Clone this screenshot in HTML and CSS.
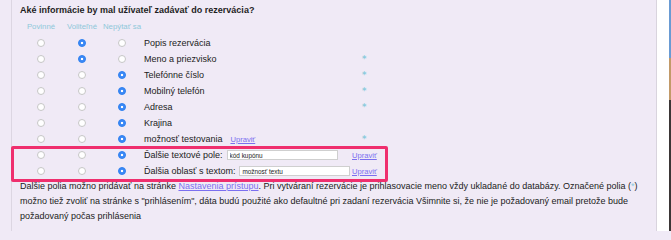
FILE: index.html
```html
<!DOCTYPE html>
<html lang="sk">
<head>
<meta charset="utf-8">
<title>Rezervácia</title>
<link rel="stylesheet" href="styles.css">
</head>
<body>
<div class="page">
  <div class="panel">
    <h3 class="title">Aké informácie by mal užívateľ zadávať do rezervácia?</h3>
    <div class="grid">
      <div class="head">Povinné</div>
      <div class="head">Voliteľné</div>
      <div class="head">Nepýtať sa</div>
      <div></div><div></div>

      <div class="rc"><input class="radio" type="radio" name="r1"></div>
      <div class="rc"><input class="radio" type="radio" name="r1" checked></div>
      <div class="rc"><input class="radio" type="radio" name="r1"></div>
      <div class="label">Popis rezervácia</div>
      <div class="star"></div>

      <div class="rc"><input class="radio" type="radio" name="r2"></div>
      <div class="rc"><input class="radio" type="radio" name="r2" checked></div>
      <div class="rc"><input class="radio" type="radio" name="r2"></div>
      <div class="label">Meno a priezvisko</div>
      <div class="star">*</div>

      <div class="rc"><input class="radio" type="radio" name="r3"></div>
      <div class="rc"><input class="radio" type="radio" name="r3"></div>
      <div class="rc"><input class="radio" type="radio" name="r3" checked></div>
      <div class="label">Telefónne číslo</div>
      <div class="star">*</div>

      <div class="rc"><input class="radio" type="radio" name="r4"></div>
      <div class="rc"><input class="radio" type="radio" name="r4"></div>
      <div class="rc"><input class="radio" type="radio" name="r4" checked></div>
      <div class="label">Mobilný telefón</div>
      <div class="star">*</div>

      <div class="rc"><input class="radio" type="radio" name="r5"></div>
      <div class="rc"><input class="radio" type="radio" name="r5"></div>
      <div class="rc"><input class="radio" type="radio" name="r5" checked></div>
      <div class="label">Adresa</div>
      <div class="star">*</div>

      <div class="rc"><input class="radio" type="radio" name="r6"></div>
      <div class="rc"><input class="radio" type="radio" name="r6"></div>
      <div class="rc"><input class="radio" type="radio" name="r6" checked></div>
      <div class="label">Krajina</div>
      <div class="star"></div>

      <div class="rc"><input class="radio" type="radio" name="r7"></div>
      <div class="rc"><input class="radio" type="radio" name="r7"></div>
      <div class="rc"><input class="radio" type="radio" name="r7" checked></div>
      <div class="label">možnosť testovania<a class="edit edit-inline" href="#">Upraviť</a></div>
      <div class="star">*</div>

      <div class="rc"><input class="radio" type="radio" name="r8"></div>
      <div class="rc"><input class="radio" type="radio" name="r8"></div>
      <div class="rc"><input class="radio" type="radio" name="r8" checked></div>
      <div class="label">Ďalšie textové pole:<input class="field" type="text" value="kód kupónu"></div>
      <div class="action"><a class="edit" href="#">Upraviť</a></div>

      <div class="rc"><input class="radio" type="radio" name="r9"></div>
      <div class="rc"><input class="radio" type="radio" name="r9"></div>
      <div class="rc"><input class="radio" type="radio" name="r9" checked></div>
      <div class="label">Ďalšia oblasť s textom:<input class="field" type="text" value="možnosť textu"></div>
      <div class="action"><a class="edit" href="#">Upraviť</a></div>
    </div>
    <p class="note">Ďalšie polia možno pridávať na stránke <a class="link" href="#">Nastavenia prístupu</a>. Pri vytváraní rezervácie je prihlasovacie meno vždy ukladané do databázy. Označené polia (<span class="mark">*</span>)<br>možno tiež zvoliť na stránke s "prihlásením", dáta budú použité ako defaultné pri zadaní rezervácia Všimnite si, že nie je požadovaný email pretože bude<br>požadovaný počas prihlásenia</p>
  </div>
  <div class="gutter"></div>
  <div class="strip"></div>
</div>
<div class="highlight"></div>
</body>
</html>
```

FILE: styles.css
```css
html, body {
  margin: 0;
  padding: 0;
}
body {
  background: #f0eaf6;
  font-family: "Liberation Sans", Arial, sans-serif;
  color: #222;
  width: 671px;
  height: 231px;
  overflow: hidden;
  position: relative;
}
.page {
  display: flex;
  height: 231px;
}
.panel {
  box-sizing: border-box;
  margin-left: 11px;
  width: 646px;
  border-left: 1px solid #dcd6e2;
  border-right: 1px solid #d9d4de;
  padding: 3px 0 0 8px;
}
.gutter {
  width: 12px;
  background: #fff;
}
.strip {
  width: 2px;
  background: linear-gradient(#6a9bd3 0 58px, #c29a69 58px 100px, #3b3636 100px);
}
.title {
  margin: 0;
  font-size: 9px;
  line-height: 14px;
  font-weight: bold;
  color: #1e1e1e;
}
.grid {
  margin-top: 2px;
  display: grid;
  grid-template-columns: 42px 40px 40px 210px 40px;
  grid-auto-rows: 16px;
}
.head {
  font-size: 7.8px;
  color: #8fc8da;
  text-align: center;
  line-height: 16px;
  white-space: nowrap;
}
.rc {
  display: flex;
  align-items: center;
  justify-content: center;
}
.radio {
  appearance: none;
  -webkit-appearance: none;
  box-sizing: border-box;
  width: 8px;
  height: 8px;
  margin: 0;
  border: 1px solid #c6c6c6;
  border-radius: 50%;
  background: #fff;
}
.radio:checked {
  border-color: #3282f0;
  background: #3a88f6 radial-gradient(circle, #fff 0 1.2px, transparent 1.6px);
}
.label {
  display: flex;
  align-items: center;
  padding-left: 2px;
  font-size: 9px;
  white-space: nowrap;
}
.star {
  font-family: "DejaVu Sans", sans-serif;
  font-size: 8.5px;
  font-weight: bold;
  line-height: 16px;
  color: #8ccadc;
  padding-left: 10px;
  margin-top: 0;
}
.action {
  display: flex;
  align-items: center;
}
.edit {
  font-size: 7.6px;
  color: #7b6ff0;
  text-decoration: underline;
}
.edit-inline {
  margin-left: 8px;
}
.field {
  box-sizing: border-box;
  margin: 0 0 0 4px;
  width: 111px;
  height: 10px;
  padding: 0 2px;
  border: 1px solid #cfcfcf;
  background: #fff;
  font-family: "Liberation Sans", Arial, sans-serif;
  font-size: 6.4px;
  color: #222;
  outline: none;
}
.note {
  margin: 0;
  font-size: 9px;
  line-height: 15px;
  color: #222;
  white-space: nowrap;
}
.link {
  color: #7b6ff0;
  text-decoration: underline;
}
.mark {
  color: #8cc9dc;
}
.highlight {
  position: absolute;
  left: 11px;
  top: 146px;
  width: 377px;
  height: 36px;
  box-sizing: border-box;
  border: 3px solid #ef2f6e;
  border-radius: 2px;
  pointer-events: none;
}
```
